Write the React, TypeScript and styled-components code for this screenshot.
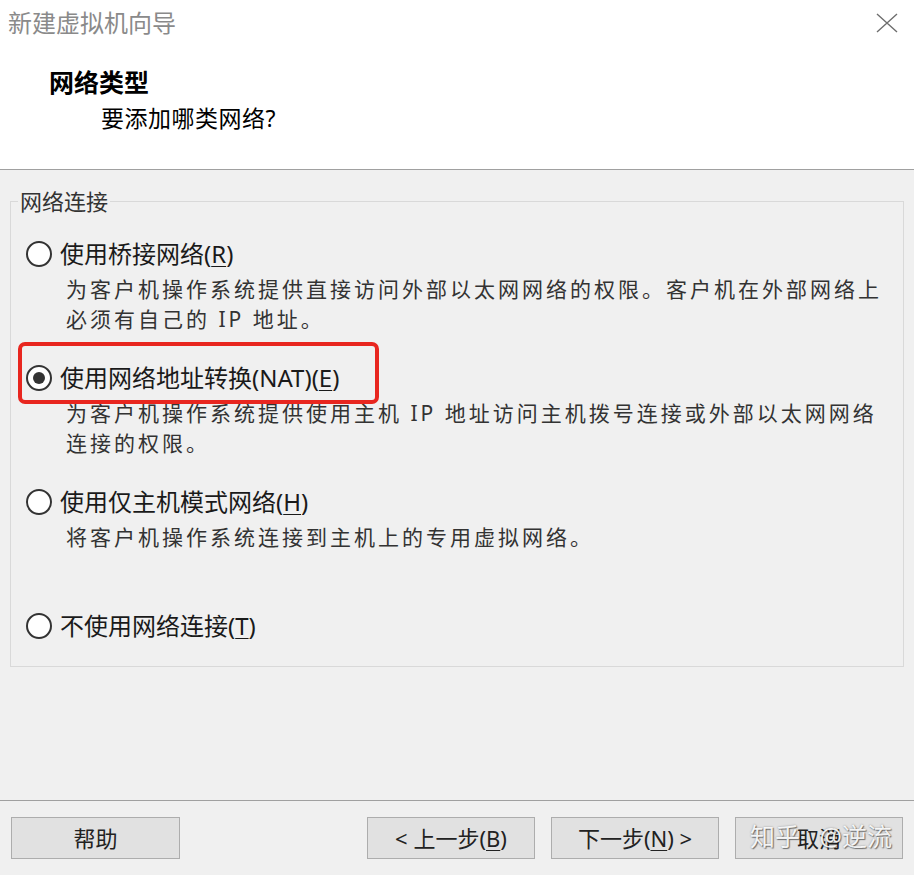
import React from "react";
import styled, { createGlobalStyle, css } from "styled-components";

const GlobalStyle = createGlobalStyle`
  html, body { margin: 0; padding: 0; background: #f0f0f0; }
  body { font-family: "Noto Sans", "Noto Sans CJK SC", sans-serif; }
  * { box-sizing: border-box; }
`;

const Dialog = styled.div`
  width: 914px;
  height: 875px;
  display: flex;
  flex-direction: column;
  background: #f0f0f0;
  overflow: hidden;
`;

const Header = styled.header`
  height: 170px;
  background: #ffffff;
  border-bottom: 1px solid #a0a0a0;
  display: flex;
  flex-direction: column;
`;

const TitleRow = styled.div`
  height: 45px;
  display: flex;
  align-items: center;
  justify-content: space-between;
  padding: 0 16px 0 8px;
`;

const Title = styled.div`
  font-size: 24px;
  line-height: 45px;
  color: #8a8a8a;
`;

const CloseButton = styled.div`
  width: 22px;
  height: 20px;
  display: flex;
  color: #6e6e6e;
`;

const Heading = styled.div`
  margin-top: 20px;
  padding-left: 49px;
  font-size: 25px;
  font-weight: 700;
  line-height: 34px;
  color: #000;
`;

const SubHeading = styled.div`
  margin-top: 2px;
  padding-left: 101px;
  font-size: 23px;
  letter-spacing: 0.5px;
  line-height: 34px;
  color: #000;
`;

const Body = styled.main`
  flex: 1;
  display: flex;
  flex-direction: column;
`;

const Group = styled.fieldset`
  margin: 18px 10px 0;
  padding: 22px 0;
  border: 1px solid #d9d9d9;
  min-width: 0;
`;

const Legend = styled.legend`
  margin-left: 7px;
  padding: 0 2px;
  font-size: 22px;
  line-height: 26px;
  color: #333;
`;

const Options = styled.div`
  display: flex;
  flex-direction: column;
  gap: 26px;
  padding-left: 15px;
`;

const Option = styled.div`
  display: flex;
  flex-direction: column;
`;

const LabelRow = styled.label`
  position: relative;
  display: flex;
  align-items: center;
  gap: 8px;
  height: 36px;
  font-size: 24px;
  line-height: 36px;
  color: #1a1a1a;
`;

const Circle = styled.span<{ $checked?: boolean }>`
  position: relative;
  flex: none;
  width: 26px;
  height: 26px;
  border: 2px solid #333;
  border-radius: 50%;
  background: #ffffff;
  ${(p) =>
    p.$checked &&
    css`
      &::after {
        content: "";
        position: absolute;
        left: 5px;
        top: 5px;
        width: 12px;
        height: 12px;
        border-radius: 50%;
        background: #333;
      }
    `}
`;

const Key = styled.span`
  text-decoration: underline;
  text-underline-offset: 3px;
  text-decoration-thickness: 1px;
`;

const Desc = styled.div`
  padding: 2px 16px 0 40px;
  min-height: 62px;
  font-size: 21px;
  letter-spacing: 3px;
  line-height: 30px;
  color: #333;
`;

const Highlight = styled.span`
  position: absolute;
  left: -8px;
  top: -18px;
  width: 361px;
  height: 62px;
  border: 4px solid #e8261f;
  border-radius: 7px;
  pointer-events: none;
`;

const Footer = styled.footer`
  position: relative;
  height: 75px;
  border-top: 1px solid #a0a0a0;
  padding: 16px 11px 0;
  display: flex;
  align-items: flex-start;
  gap: 16px;
`;

const Spacer = styled.div`
  flex: 1;
`;

const Button = styled.button<{ $wide?: boolean }>`
  width: ${(p) => (p.$wide ? 169 : 168)}px;
  height: 42px;
  padding: 0;
  border: 1px solid #adadad;
  background: #e1e1e1;
  font-family: inherit;
  font-size: 22px;
  line-height: 40px;
  color: #222;
`;

const Watermark = styled.div`
  position: absolute;
  right: 22px;
  top: 20px;
  font-size: 25px;
  line-height: 30px;
  word-spacing: 13px;
  color: rgba(255, 255, 255, 0.92);
  text-shadow: 1px 1px 1px rgba(0, 0, 0, 0.45), 0 0 2px rgba(0, 0, 0, 0.35);
  pointer-events: none;
  white-space: nowrap;
`;

type Opt = {
  label: string;
  key: string;
  desc?: string;
  checked?: boolean;
  highlight?: boolean;
};

const options: Opt[] = [
  {
    label: "使用桥接网络",
    key: "R",
    desc: "为客户机操作系统提供直接访问外部以太网网络的权限。客户机在外部网络上必须有自己的 IP 地址。",
  },
  {
    label: "使用网络地址转换(NAT)",
    key: "E",
    desc: "为客户机操作系统提供使用主机 IP 地址访问主机拨号连接或外部以太网网络连接的权限。",
    checked: true,
    highlight: true,
  },
  {
    label: "使用仅主机模式网络",
    key: "H",
    desc: "将客户机操作系统连接到主机上的专用虚拟网络。",
  },
  { label: "不使用网络连接", key: "T" },
];

export default function App() {
  return (
    <>
      <GlobalStyle />
      <Dialog>
        <Header>
          <TitleRow>
            <Title>新建虚拟机向导</Title>
            <CloseButton>
              <svg width="22" height="20" viewBox="0 0 22 20">
                <path d="M1 1 L21 19 M21 1 L1 19" stroke="currentColor" strokeWidth="1.4" fill="none" />
              </svg>
            </CloseButton>
          </TitleRow>
          <Heading>网络类型</Heading>
          <SubHeading>要添加哪类网络?</SubHeading>
        </Header>
        <Body>
          <Group>
            <Legend>网络连接</Legend>
            <Options>
              {options.map((o) => (
                <Option key={o.key}>
                  <LabelRow>
                    <Circle $checked={o.checked} />
                    <span>
                      {o.label}(<Key>{o.key}</Key>)
                    </span>
                    {o.highlight && <Highlight />}
                  </LabelRow>
                  {o.desc && <Desc>{o.desc}</Desc>}
                </Option>
              ))}
            </Options>
          </Group>
        </Body>
        <Footer>
          <Button $wide>帮助</Button>
          <Spacer />
          <Button>
            &lt; 上一步(<Key>B</Key>)
          </Button>
          <Button>
            下一步(<Key>N</Key>) &gt;
          </Button>
          <Button>取消</Button>
          <Watermark>知乎 @逆流</Watermark>
        </Footer>
      </Dialog>
    </>
  );
}
